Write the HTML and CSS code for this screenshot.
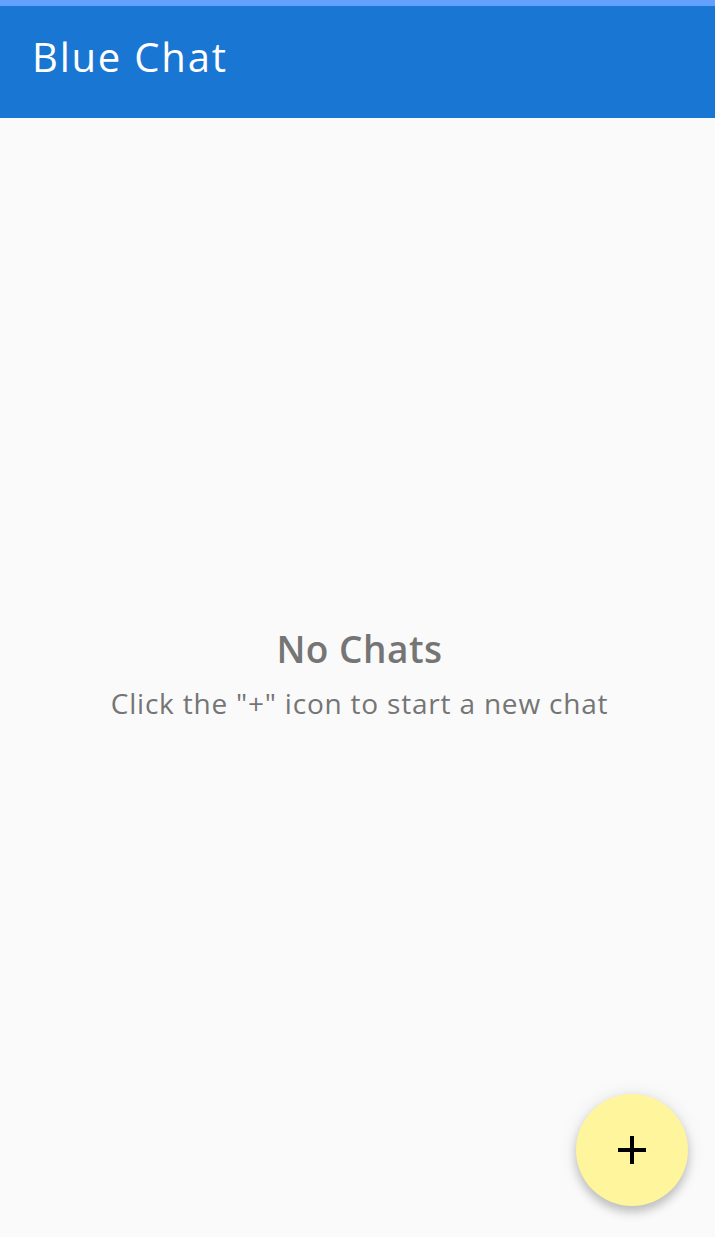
FILE: index.html
```html
<!DOCTYPE html>
<html>
<head>
<meta charset="utf-8">
<link rel="stylesheet" href="styles.css">
</head>
<body>
<div class="app">
  <div class="status"></div>
  <header class="appbar"><h1 class="title">Blue Chat</h1></header>
  <main class="content">
    <div class="empty">
      <div class="empty-title">No Chats</div>
      <div class="empty-sub">Click the "+" icon to start a new chat</div>
    </div>
  </main>
  <button class="fab" aria-label="New chat">
    <svg width="28" height="28" viewBox="0 0 28 28"><path d="M12 0h4v12h12v4H16v12h-4V16H0v-4h12z" fill="#000"/></svg>
  </button>
</div>
</body>
</html>
```
FILE: styles.css
```css
html, body { margin: 0; padding: 0; }
body { background: #fafafa; font-family: "Open Sans", sans-serif; }
.app { position: relative; width: 715px; height: 1237px; display: flex; flex-direction: column; overflow: hidden; }
.status { height: 6px; background: #64a1ff; }
.appbar { height: 112px; background: #1976d2; display: flex; align-items: center; padding: 0 0 12px 32px; box-sizing: border-box; }
.title { margin: 0; font-weight: 400; color: #fff; font-size: 40px; letter-spacing: 1.8px; line-height: normal; }
.content { flex: 1; display: flex; align-items: center; justify-content: center; }
.empty { text-align: center; color: #757575; margin-bottom: 7px; padding-left: 4px; }
.empty-title { font-size: 37px; font-weight: 600; line-height: 48px; letter-spacing: 0.5px; }
.empty-sub { font-size: 28px; line-height: 40px; margin-top: 10px; letter-spacing: 0.8px; }
.fab { position: absolute; left: 576px; top: 1094px; width: 112px; height: 112px; border-radius: 50%; border: none; background: #fff59d; box-shadow: 0 6px 10px rgba(0,0,0,0.2), 0 1px 18px rgba(0,0,0,0.1); display: flex; align-items: center; justify-content: center; padding: 0; }
```
